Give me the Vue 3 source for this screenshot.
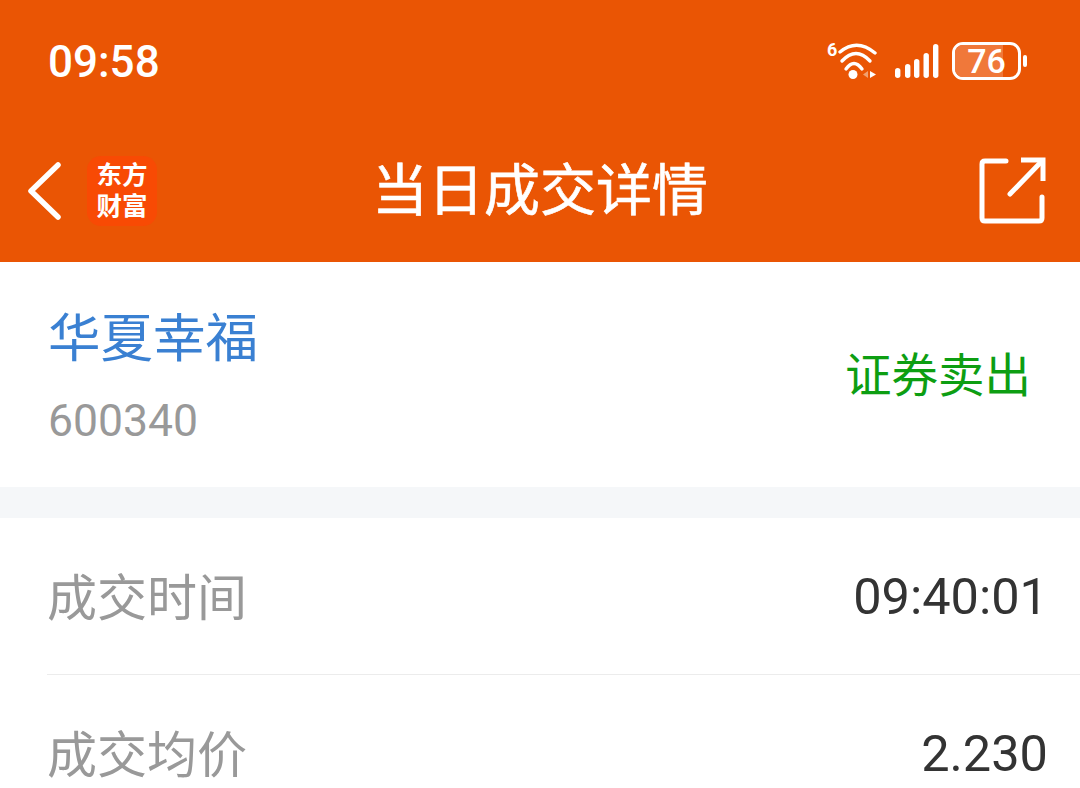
<script setup>
const rows = [
  { label: '成交时间', value: '09:40:01' },
  { label: '成交均价', value: '2.230' },
]
</script>

<template>
  <div class="page">
    <header class="head">
      <div class="status">
        <span class="clock">09:58</span>
        <div class="status__icons">
          <span class="wifi-six">6</span>
          <svg width="44" height="40" viewBox="0 0 44 40" fill="none">
            <path d="M4 11Q21 -3 39 12" stroke="#fff" stroke-width="3.400" stroke-linecap="round" />
            <path d="M6 20Q20 5 34 20" stroke="#fff" stroke-width="3.400" stroke-linecap="round" />
            <path d="M10 28Q18 17 26 28" stroke="#fff" stroke-width="3.400" stroke-linecap="round" />
            <circle cx="17" cy="33.500" r="4.500" fill="#fff" />
            <path d="M32 30V37L27 33.500Z" fill="#f0a070" />
            <path d="M34 30V37L40 33.500Z" fill="#fff" />
          </svg>
          <svg class="signal" width="46" height="36" viewBox="0 0 46 36" fill="#fff">
            <rect x="1" y="25" width="5.400" height="10" rx="2.700" />
            <rect x="11" y="21" width="5.400" height="14" rx="2.700" />
            <rect x="20" y="16" width="5.400" height="19" rx="2.700" />
            <rect x="29.500" y="10" width="5.400" height="25" rx="2.700" />
            <rect x="39" y="1" width="5.400" height="34" rx="2.700" />
          </svg>
          <div class="battery">
            <div class="battery__body">
              <div class="battery__fill"></div>
              <span class="battery__num">76</span>
            </div>
            <span class="battery__cap"></span>
          </div>
        </div>
      </div>
      <div class="nav">
        <div class="nav__left">
          <svg width="36" height="58" viewBox="0 0 36 58" fill="none">
            <path d="M31 3L4 29L31 55" stroke="#fff" stroke-width="5.500" stroke-linecap="round" stroke-linejoin="round" />
          </svg>
          <div class="logo">
            <span>东方</span>
            <span>财富</span>
          </div>
        </div>
        <h1 class="nav__title">当日成交详情</h1>
        <svg width="68" height="68" viewBox="0 0 68 68" fill="none">
          <path d="M27 4H6Q3 4 3 7V61Q3 64 6 64H60Q63 64 63 61V40" stroke="#fff" stroke-width="5" stroke-linecap="round" />
          <path d="M42 3H64V24" stroke="#fff" stroke-width="5" />
          <path d="M63 4L31 37" stroke="#fff" stroke-width="5" stroke-linecap="round" />
        </svg>
      </div>
    </header>

    <section class="stock">
      <div class="stock__info">
        <div class="stock__name">华夏幸福</div>
        <div class="stock__code">600340</div>
      </div>
      <div class="stock__side">证券卖出</div>
    </section>

    <div class="gap"></div>

    <section class="detail">
      <div v-for="row in rows" :key="row.label" class="row">
        <span class="row__label">{{ row.label }}</span>
        <span class="row__value">{{ row.value }}</span>
      </div>
    </section>
  </div>
</template>

<style scoped>
.page {
  width: 1080px;
  height: 788px;
  overflow: hidden;
  background: #fff;
  font-family: Roboto, "Noto Sans CJK SC", sans-serif;
}
.head {
  height: 262px;
  background: #ea5504;
  color: #fff;
}
.status {
  display: flex;
  align-items: center;
  justify-content: space-between;
  height: 124px;
  padding: 0 53px 0 48px;
  box-sizing: border-box;
}
.clock {
  font-size: 44px;
  font-weight: 500;
}
.status__icons {
  display: flex;
  align-items: center;
  position: relative;
  margin-bottom: 3px;
}
.wifi-six {
  position: absolute;
  left: -9px;
  top: 0;
  font-size: 18px;
  font-weight: 700;
  line-height: 1;
}
.signal {
  margin-left: 14px;
}
.battery {
  display: flex;
  align-items: center;
  margin-left: 12px;
}
.battery__body {
  position: relative;
  width: 69px;
  height: 38px;
  border: 3px solid #fff;
  border-radius: 11px;
  box-sizing: border-box;
  overflow: hidden;
}
.battery__fill {
  height: 100%;
  width: 76%;
  background: #f0783a;
}
.battery__num {
  position: absolute;
  inset: 0;
  display: flex;
  align-items: center;
  justify-content: center;
  font-size: 34px;
  font-weight: 500;
  line-height: 1;
}
.battery__cap {
  width: 4px;
  height: 12px;
  margin-left: 2px;
  background: #fff;
  border-radius: 2px;
}
.nav {
  display: flex;
  align-items: center;
  justify-content: space-between;
  height: 138px;
  padding: 0 33px 4px 27px;
  box-sizing: border-box;
  position: relative;
}
.nav__left {
  display: flex;
  align-items: center;
  gap: 24px;
}
.logo {
  display: flex;
  flex-direction: column;
  align-items: center;
  justify-content: center;
  width: 70px;
  height: 70px;
  background: #f84a04;
  border-radius: 14px;
  font-size: 25.500px;
  font-weight: 700;
  line-height: 31px;
}
.nav__title {
  position: absolute;
  left: 0;
  right: 0;
  text-align: center;
  margin: 0;
  font-size: 56px;
  font-weight: 400;
  line-height: 1;
  -webkit-text-stroke: 0.6px #fff;
}
.stock {
  display: flex;
  align-items: center;
  justify-content: space-between;
  height: 225px;
  padding: 0 49px 0 48px;
  box-sizing: border-box;
}
.stock__info {
  padding-top: 6px;
}
.stock__name {
  font-size: 52.500px;
  color: #3a80d2;
  line-height: 60px;
  margin-bottom: 27px;
}
.stock__code {
  font-size: 44.500px;
  color: #999;
  line-height: 50px;
}
.stock__side {
  font-size: 46.500px;
  color: #0d9e12;
  margin-bottom: 6px;
}
.gap {
  height: 31px;
  background: #f5f7f9;
}
.detail {
  padding-left: 47px;
}
.row {
  display: flex;
  align-items: center;
  justify-content: space-between;
  height: 156px;
  padding-right: 32px;
  border-bottom: 1px solid #ececec;
}
.row__label {
  font-size: 50px;
  color: #999;
  margin-bottom: 4px;
}
.row__value {
  font-size: 50.500px;
  color: #333;
}
</style>
